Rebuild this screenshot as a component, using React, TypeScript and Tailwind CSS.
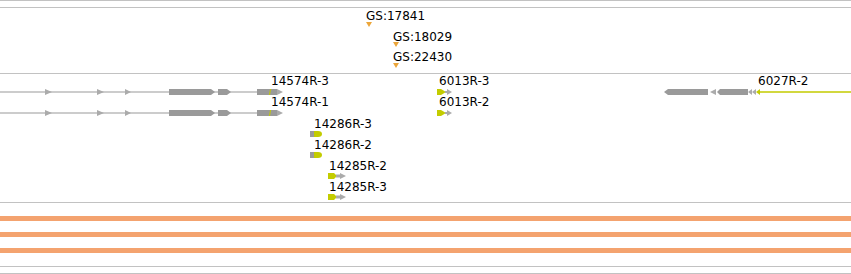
import React from "react";

const G = "#9a9a9a";
const GL = "#ababab";
const Y = "#c3cc00";

type Lbl = { t: string; x: number; y: number };

const geneLabels: Lbl[] = [
  { t: "14574R-3", x: 271, y: 75 },
  { t: "14574R-1", x: 271, y: 96 },
  { t: "14286R-3", x: 314, y: 118 },
  { t: "14286R-2", x: 314, y: 139 },
  { t: "14285R-2", x: 329, y: 160 },
  { t: "14285R-3", x: 329, y: 181 },
  { t: "6013R-3", x: 439, y: 75 },
  { t: "6013R-2", x: 439, y: 96 },
  { t: "6027R-2", x: 758, y: 75 },
];

const gsLabels: Lbl[] = [
  { t: "GS:17841", x: 366, y: 10 },
  { t: "GS:18029", x: 393, y: 31 },
  { t: "GS:22430", x: 393, y: 51 },
];

function Label({ t, x, y, top }: Lbl & { top: number }) {
  return (
    <div
      className="absolute whitespace-nowrap text-[12px] leading-[12px] text-black"
      style={{ left: x, top: y - top, fontFamily: '"DejaVu Sans", sans-serif' }}
    >
      {t}
    </div>
  );
}

function arrowR(x: number, c: number, w = 7, h = 3) {
  return `${x},${c - h} ${x + w},${c} ${x},${c + h}`;
}

function Transcript14574({ c }: { c: number }) {
  const t = c - 3;
  const b = c + 3;
  return (
    <g>
      <rect x={0} y={c - 0.5} width={258} height={1} fill={G} />
      <polygon points={arrowR(45, c)} fill={GL} />
      <polygon points={arrowR(97, c)} fill={GL} />
      <polygon points={arrowR(125, c, 6)} fill={GL} />
      <polygon points={`169,${t} 211,${t} 215,${c} 211,${b} 169,${b}`} fill={G} />
      <polygon points={`218,${t} 227,${t} 231,${c} 227,${b} 218,${b}`} fill={G} />
      <rect x={257} y={t} width={20} height={6} fill={G} />
      <polygon points={`277,${t} 283,${c} 277,${b}`} fill={GL} />
      <line x1={270.5} y1={t} x2={269.5} y2={b} stroke={Y} strokeWidth={1} />
    </g>
  );
}

function T14286({ c }: { c: number }) {
  const t = c - 3;
  const b = c + 3;
  return (
    <g>
      <rect x={310} y={t} width={4} height={6} fill={G} />
      <path d={`M314 ${t} H318 Q322 ${t} 322 ${c} Q322 ${b} 318 ${b} H314 Z`} fill={Y} />
    </g>
  );
}

function T14285({ c }: { c: number }) {
  const t = c - 3;
  const b = c + 3;
  return (
    <g>
      <polygon points={`328,${t} 334,${t} 337,${c} 334,${b} 328,${b}`} fill={Y} />
      <rect x={336} y={c - 1.5} width={5} height={3} fill={GL} />
      <polygon points={arrowR(340, c, 6)} fill={GL} />
    </g>
  );
}

function T6013({ c }: { c: number }) {
  const t = c - 3;
  const b = c + 3;
  return (
    <g>
      <rect x={437} y={t} width={4} height={6} fill={Y} />
      <polygon points={`441,${t} 446,${c} 441,${b}`} fill={Y} />
      <rect x={445} y={c - 1} width={3} height={2} fill={GL} />
      <polygon points={arrowR(447, c, 5)} fill={GL} />
    </g>
  );
}

function T6027({ c }: { c: number }) {
  const t = c - 3;
  const b = c + 3;
  return (
    <g>
      <polygon points={`664,${c} 668,${t} 708,${t} 708,${b} 668,${b}`} fill={G} />
      <polygon points={`710,${c} 716,${t} 716,${b}`} fill={GL} />
      <polygon points={`717,${c} 720,${t} 748,${t} 748,${b} 720,${b}`} fill={G} />
      <polygon points={`748,${c} 752,${t} 752,${b}`} fill={GL} />
      <polygon points={`752,${c} 756,${t} 756,${b}`} fill={GL} />
      <polygon points={`756,${c} 760,${t} 760,${b}`} fill={Y} />
      <rect x={760} y={c - 0.75} width={91} height={1.5} fill={Y} />
    </g>
  );
}

function Hline() {
  return <div className="h-px w-full bg-[#c2c2c2]" />;
}

export default function App() {
  const geneTop = 74;
  const gsTop = 8;
  return (
    <div className="w-[851px] h-[274px] bg-white overflow-hidden flex flex-col">
      <Hline />
      <div className="h-[6px]" />
      <Hline />
      {/* GS track */}
      <div className="relative h-[65px]">
        <svg className="absolute left-0 top-0" width={851} height={65} viewBox={`0 ${gsTop} 851 65`}>
          <polygon points="366,22 372,22 369,27" fill="#eca63a" />
          <polygon points="393,42 399,42 396,47" fill="#eca63a" />
          <polygon points="393,63 399,63 396,68" fill="#eca63a" />
        </svg>
        {gsLabels.map((l) => (
          <Label key={l.t} {...l} top={gsTop} />
        ))}
      </div>
      <Hline />
      {/* Gene track */}
      <div className="relative h-[128px]">
        <svg className="absolute left-0 top-0" width={851} height={128} viewBox={`0 ${geneTop} 851 128`}>
          <Transcript14574 c={92} />
          <Transcript14574 c={113} />
          <T14286 c={134} />
          <T14286 c={155} />
          <T14285 c={176} />
          <T14285 c={197} />
          <T6013 c={92} />
          <T6013 c={113} />
          <T6027 c={92} />
        </svg>
        {geneLabels.map((l) => (
          <Label key={l.t} {...l} top={geneTop} />
        ))}
      </div>
      <Hline />
      {/* Orange bars track */}
      <div className="h-[63px] flex flex-col gap-[11px] pt-[13px]">
        <div className="h-[5px] w-full bg-[#f4a36f]" />
        <div className="h-[5px] w-full bg-[#f4a36f]" />
        <div className="h-[5px] w-full bg-[#f4a36f]" />
      </div>
      <Hline />
      <div className="h-[6px]" />
      <Hline />
    </div>
  );
}
